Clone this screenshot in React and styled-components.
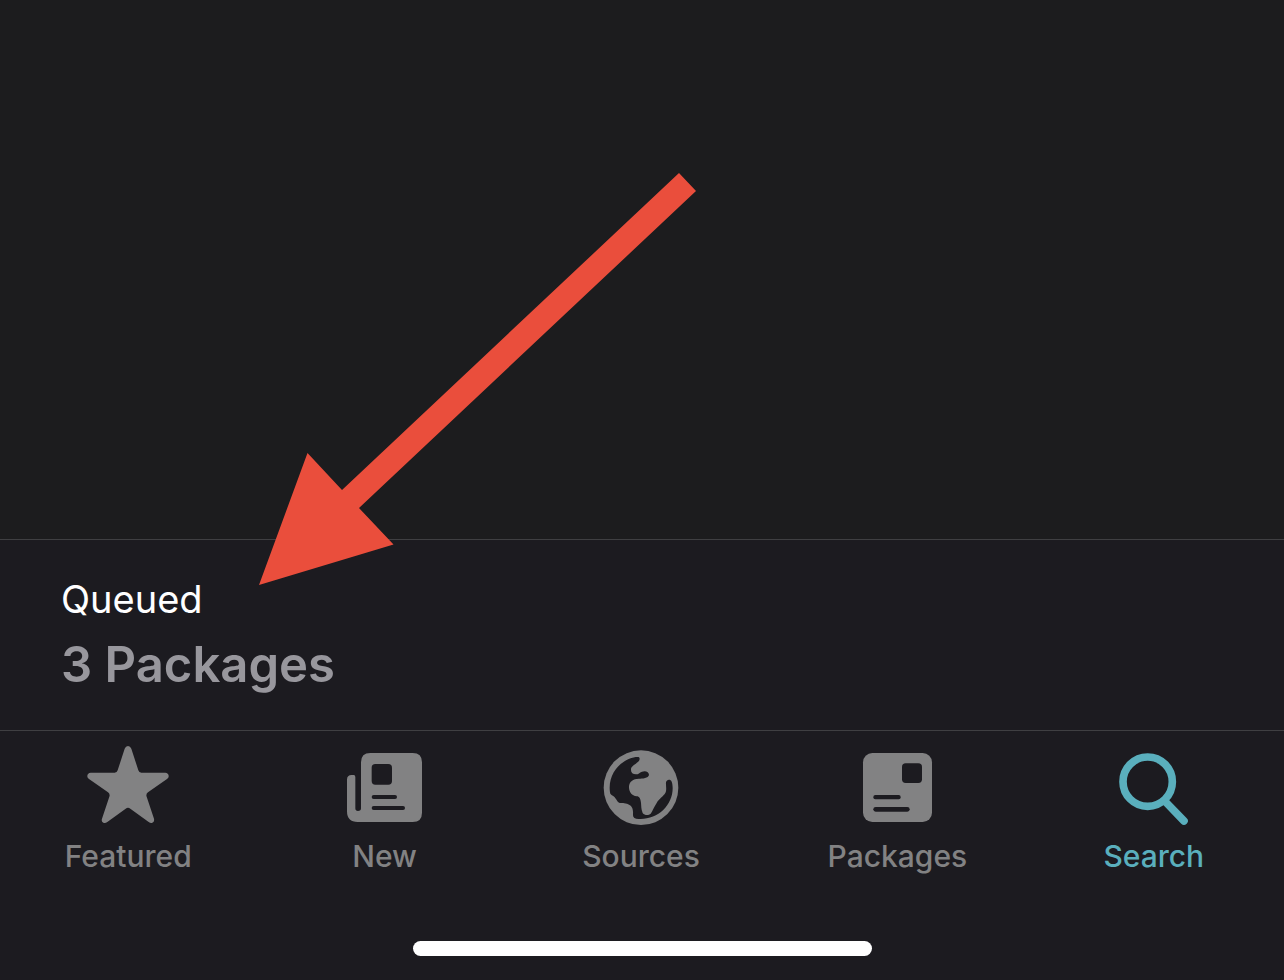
import React from "react";
import styled, { createGlobalStyle } from "styled-components";

const GlobalStyle = createGlobalStyle`
  * { box-sizing: border-box; }
  body {
    margin: 0;
    background: #1c1c1e;
    font-family: Inter, "Liberation Sans", sans-serif;
  }
`;

const Screen = styled.div`
  display: flex;
  flex-direction: column;
  min-height: 100vh;
`;

const Content = styled.main`
  position: relative;
  flex: 1;
  min-height: 400px;
`;

const Arrow = styled.svg`
  position: absolute;
  left: 259px;
  bottom: -46px;
  width: 437px;
  height: 412px;
  fill: #ea4e3c;
  pointer-events: none;
`;

const QueueBar = styled.section`
  display: flex;
  flex-direction: column;
  gap: 12px;
  padding: 35px 61px;
  background: #1c1b20;
  border-top: 1px solid #3f3f42;
`;

const QueueTitle = styled.h2`
  margin: 0;
  color: #ffffff;
  font-size: 38px;
  font-weight: 400;
  line-height: 48px;
`;

const QueueCount = styled.p`
  margin: 0;
  color: #98979d;
  font-size: 49px;
  font-weight: 600;
  line-height: 60px;
`;

const Footer = styled.footer`
  display: flex;
  flex-direction: column;
  align-items: center;
  gap: 67px;
  padding: 13px 0 24px;
  background: #1c1b20;
  border-top: 1px solid #3f3f42;
`;

const TabBar = styled.nav`
  display: grid;
  grid-template-columns: repeat(5, 1fr);
  width: 100%;
  padding-right: 2px;
`;

const Tab = styled.button`
  display: flex;
  flex-direction: column;
  align-items: center;
  gap: 6px;
  padding: 0;
  border: 0;
  background: none;
  color: ${(p) => (p.$active ? "#5aafbd" : "#828283")};
  font-family: inherit;
  font-size: 30px;
  font-weight: 500;
  line-height: 36px;
  cursor: pointer;
`;

const TabIcon = styled.svg`
  display: block;
  width: 88px;
  height: 88px;
  fill: currentColor;
`;

const HomeIndicator = styled.div`
  width: 459px;
  max-width: 80%;
  height: 15px;
  border-radius: 8px;
  background: #ffffff;
`;

const cut = "#1c1b20";

const StarIcon = () => (
  <TabIcon viewBox="132 27 264 264" aria-hidden="true">
    <path d="M254 41Q257 33 264 33Q271 33 274 41L295 106Q297 113 304 113L376 113Q385 114 386 122Q387 127 381 132L324 172Q317 177 320 185L342 251Q344 260 337 263Q332 265 326 261L271 221Q264 216 257 221L202 261Q196 265 190 263Q183 259 186 251L208 185Q211 177 204 172L147 132Q141 127 142 122Q143 114 152 113L224 113Q231 113 233 106Z" />
  </TabIcon>
);

const NewsIcon = () => (
  <TabIcon viewBox="63 27 264 264" aria-hidden="true">
    <path d="M123 82Q123 54 151 54H278Q306 54 306 82V233Q306 261 278 261H113Q81 261 81 229V134Q81 120 95 120H101Q106 120 106 126V220Q106 228 114 228Q123 228 123 220Z" />
    <g fill={cut}>
      <rect x="155" y="87" width="61" height="62" rx="11" />
      <rect x="155" y="180" width="76" height="12" rx="6" />
      <rect x="155" y="213" width="100" height="12" rx="6" />
    </g>
  </TabIcon>
);

const GlobeIcon = () => (
  <TabIcon viewBox="81 27 264 264" aria-hidden="true">
    <circle cx="213" cy="158" r="112" />
    <path
      fill={cut}
      d="M203 66C170 66 119 100 119 158C119 166 120 171 121 176C124 181 130 181 134 187C138 192 140 196 144 201C150 207 160 203 171 206C187 211 190 222 189 238C188 247 194 252 206 252C262 255 308 212 308 160C308 152 307 145 305 140C302 132 290 132 288 142C287 152 291 165 286 174C280 184 268 190 260 204C252 216 248 228 242 236C236 242 224 242 218 234C213 222 214 212 213 204C212 192 208 184 200 184C186 182 177 172 177 156C177 140 190 131 206 131C218 131 235 130 237 120C237 110 226 106 216 110C208 113 206 118 198 118C188 118 182 112 183 102C184 90 208 84 209 72C209 67 206 66 203 66Z"
    />
  </TabIcon>
);

const PackageIcon = () => (
  <TabIcon viewBox="99 27 264 264" aria-hidden="true">
    <rect x="129" y="54" width="207" height="207" rx="28" />
    <g fill={cut}>
      <rect x="246" y="85" width="60" height="59" rx="11" />
      <rect x="160" y="180" width="82" height="13" rx="6" />
      <rect x="160" y="216" width="109" height="14" rx="7" />
    </g>
  </TabIcon>
);

const SearchIcon = () => (
  <TabIcon viewBox="60 27 264 264" aria-hidden="true">
    <g fill="none" stroke="currentColor" strokeLinecap="round">
      <circle cx="173" cy="140" r="74" strokeWidth="23" />
      <path d="M226 200L282 258" strokeWidth="23" />
    </g>
  </TabIcon>
);

const tabs = [
  { label: "Featured", Icon: StarIcon },
  { label: "New", Icon: NewsIcon },
  { label: "Sources", Icon: GlobeIcon },
  { label: "Packages", Icon: PackageIcon },
  { label: "Search", Icon: SearchIcon, active: true },
];

export default function App() {
  return (
    <Screen>
      <GlobalStyle />
      <Content>
        <Arrow viewBox="259 173 437 412" aria-hidden="true">
          <path d="M679 173L696 191L359 508L393.500 544.500L259 585L307.500 453L342 490Z" />
        </Arrow>
      </Content>
      <QueueBar>
        <QueueTitle>Queued</QueueTitle>
        <QueueCount>3 Packages</QueueCount>
      </QueueBar>
      <Footer>
        <TabBar>
          {tabs.map(({ label, Icon, active }) => (
            <Tab
              key={label}
              type="button"
              $active={active}
              aria-current={active ? "page" : undefined}
            >
              <Icon />
              {label}
            </Tab>
          ))}
        </TabBar>
        <HomeIndicator />
      </Footer>
    </Screen>
  );
}
